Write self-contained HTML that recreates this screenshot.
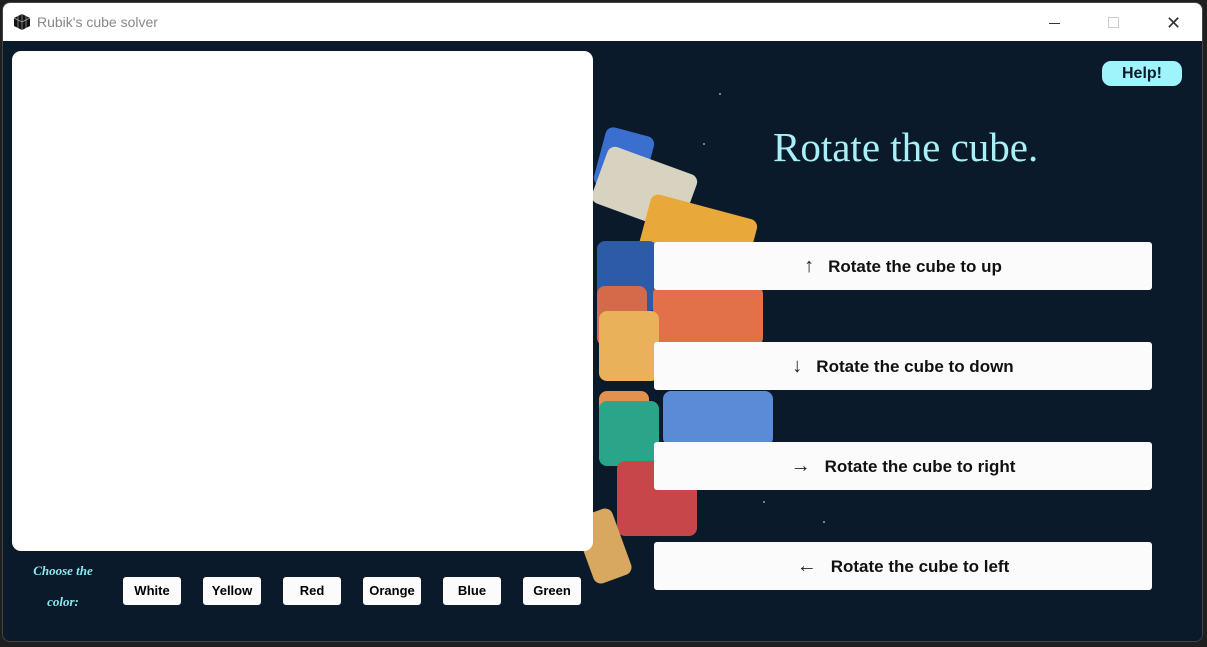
<!DOCTYPE html>
<html><head><meta charset="utf-8"><style>
*{margin:0;padding:0;box-sizing:border-box}
body{width:1207px;height:647px;background:#1f1f1f;position:relative;overflow:hidden;font-family:"Liberation Sans",sans-serif}
.win{position:absolute;left:2px;top:2px;width:1201px;height:640px;border-radius:8px;overflow:hidden;background:#0a1a2a;border:1px solid #444}
.title{position:absolute;left:0;top:0;width:100%;height:38px;background:#fff;}
.title span{position:absolute;left:34px;top:11px;font-size:14px;color:#888}
.content{position:absolute;left:0;top:38px;width:100%;height:602px;background:#0a1a2a}
.panel{position:absolute;left:9px;top:10px;width:581px;height:500px;background:#fff;border-radius:9px}
.cbtn{position:absolute;top:536px;width:58px;height:28px;background:#fbfbfb;border-radius:3px;font:bold 13px "Liberation Sans",sans-serif;color:#000;text-align:center;line-height:28px}
.rbtn{position:absolute;left:651px;width:498px;height:48px;background:#fbfbfb;border-radius:3px;font:bold 17px "Liberation Sans",sans-serif;color:#111;text-align:center;line-height:48px}
.rbtn b{font-weight:normal;font-size:20px;margin-right:14px;color:#222}
.blk{position:absolute;border-radius:8px}
.star{position:absolute;width:2px;height:2px;background:#8aa;border-radius:1px}
</style></head><body>
<div class="win">
<div class="title"><svg style="position:absolute;left:10px;top:10px" width="18" height="18" viewBox="0 0 18 18"><path d="M9 1 L17 5 L17 13 L9 17 L1 13 L1 5Z" fill="#111"/><path d="M9 1 L9 17 M1 5 L9 9 L17 5 M5 3 L5 15 M13 3 L13 15" stroke="#aaa" stroke-width=".7" fill="none"/></svg><span>Rubik's cube solver</span>
<div style="position:absolute;left:1046px;top:20px;width:11px;height:1px;background:#333"></div>
<div style="position:absolute;left:1105px;top:14px;width:11px;height:11px;border:1px solid #ccc"></div>
<div style="position:absolute;left:1163px;top:13px;font-size:18px;color:#333;line-height:14px">✕</div>
</div>
<div class="content">
<div class="blk" style="left:596px;top:90px;width:50px;height:60px;background:#3a6fd0;transform:rotate(15deg)"></div>
<div class="blk" style="left:594px;top:118px;width:95px;height:60px;background:#d8d2c0;transform:rotate(20deg)"></div>
<div class="blk" style="left:640px;top:165px;width:110px;height:60px;background:#e8a83a;transform:rotate(15deg)"></div>
<div class="blk" style="left:594px;top:200px;width:60px;height:70px;background:#2e5ba8"></div>
<div class="blk" style="left:594px;top:245px;width:50px;height:60px;background:#d46a4a"></div>
<div class="blk" style="left:650px;top:245px;width:110px;height:60px;background:#e27048"></div>
<div class="blk" style="left:596px;top:270px;width:60px;height:70px;background:#e8b15a"></div>
<div class="blk" style="left:596px;top:350px;width:50px;height:40px;background:#e3914c"></div>
<div class="blk" style="left:596px;top:360px;width:60px;height:65px;background:#2aa58a"></div>
<div class="blk" style="left:660px;top:350px;width:110px;height:55px;background:#5b8bd6"></div>
<div class="blk" style="left:614px;top:420px;width:80px;height:75px;background:#c7464a"></div>
<div class="blk" style="left:580px;top:470px;width:40px;height:70px;background:#d8a860;transform:rotate(-20deg)"></div>
<div class="star" style="left:716px;top:52px"></div><div class="star" style="left:700px;top:102px"></div><div class="star" style="left:757px;top:300px"></div><div class="star" style="left:820px;top:480px"></div><div class="star" style="left:760px;top:460px"></div>
<div class="panel"></div>
<div style="position:absolute;left:1099px;top:20px;width:80px;height:25px;background:#9ff3fb;border-radius:9px;font:bold 16px 'Liberation Sans',sans-serif;text-align:center;line-height:25px;color:#0a1a2a">Help!</div>
<div style="position:absolute;left:770px;top:82px;font:41px 'Liberation Serif',serif;color:#a8f0f7">Rotate the cube.</div>
<div class="rbtn" style="top:201px"><b>↑</b>Rotate the cube to up</div>
<div class="rbtn" style="top:301px"><b>↓</b>Rotate the cube to down</div>
<div class="rbtn" style="top:401px"><b>→</b>Rotate the cube to right</div>
<div class="rbtn" style="top:501px"><b>←</b>Rotate the cube to left</div>
<div style="position:absolute;left:20px;top:514px;width:80px;text-align:center;font:italic bold 13px 'Liberation Serif',serif;color:#8ae8f0;line-height:31px">Choose the<br>color:</div>
<div class="cbtn" style="left:120px">White</div>
<div class="cbtn" style="left:200px">Yellow</div>
<div class="cbtn" style="left:280px">Red</div>
<div class="cbtn" style="left:360px">Orange</div>
<div class="cbtn" style="left:440px">Blue</div>
<div class="cbtn" style="left:520px">Green</div>
</div></div>
</body></html>
